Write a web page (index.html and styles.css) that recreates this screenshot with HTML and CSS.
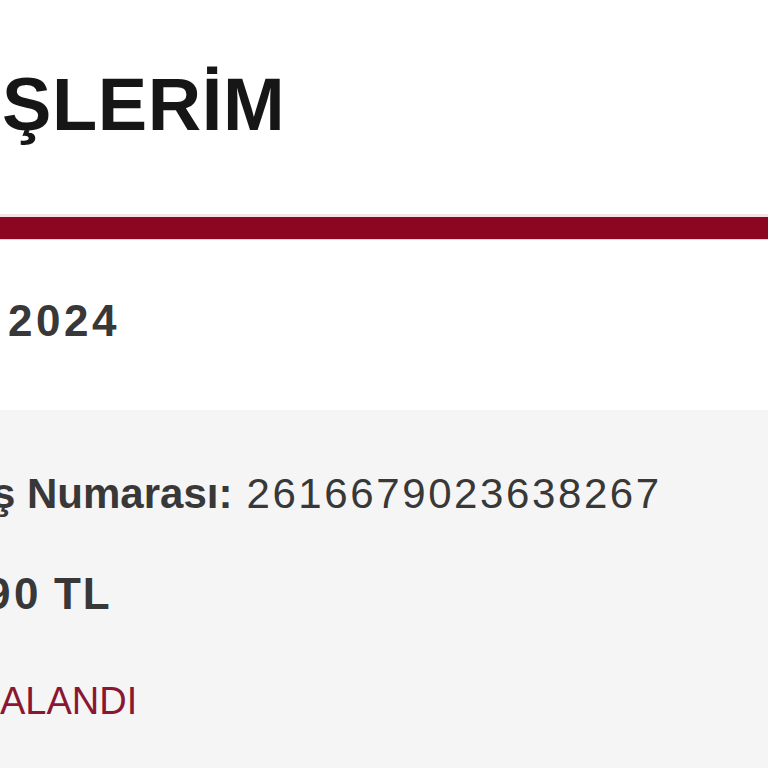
FILE: index.html
```html
<!DOCTYPE html>
<html lang="tr">
<head>
<meta charset="utf-8">
<title>Siparişlerim</title>
<link rel="stylesheet" href="styles.css">
</head>
<body>
<div class="page">
  <header class="header">
    <h1 class="title">ŞLERİM</h1>
  </header>
  <div class="divider"></div>
  <section class="date-block">
    <div class="date"><span class="digits-bold">2024</span></div>
  </section>
  <section class="order-card">
    <div class="row row-number"><span class="label">ş Numarası:</span><span class="order-no">2616679023638267</span></div>
    <div class="row row-price"><span class="digits-bold price-digits">90</span><span class="currency">TL</span></div>
    <div class="row row-status">ALANDI</div>
  </section>
</div>
</body>
</html>
```

FILE: styles.css
```css
html, body {
  margin: 0;
  padding: 0;
  background: #ffffff;
  overflow: hidden;
}

body {
  width: 768px;
  height: 768px;
  font-family: "Liberation Sans", Arial, sans-serif;
  color: #353535;
}

.page {
  display: flex;
  flex-direction: column;
  height: 768px;
}

.header {
  padding: 68px 0 72px;
  background: #ffffff;
}

.title {
  margin: 0 0 0 2px;
  font-size: 74px;
  line-height: 74px;
  font-weight: 700;
  letter-spacing: 0.6px;
  color: #161616;
  white-space: nowrap;
}

.divider {
  height: 22px;
  background: #8c0621;
  border-top: 3px solid #f4e3e6;
  border-bottom: 1px solid #efd0d6;
}

.date-block {
  padding: 59px 0 67px;
  background: #ffffff;
}

.date {
  margin-left: 8px;
  font-size: 44px;
  line-height: 44px;
  font-weight: 700;
  color: #383838;
}

.digits-bold {
  letter-spacing: 3.5px;
}

.order-card {
  flex: 1;
  background: #f5f5f5;
  padding-top: 63px;
  display: flex;
  flex-direction: column;
}

.row {
  white-space: nowrap;
}

.row-number {
  margin-left: -8px;
  font-size: 42px;
  line-height: 42px;
  color: #383838;
}

.label {
  font-weight: 700;
}

.order-no {
  margin-left: 14px;
  letter-spacing: 2.6px;
  font-weight: 400;
}

.row-price {
  margin-top: 57px;
  margin-left: -14px;
  font-size: 44px;
  line-height: 44px;
  font-weight: 700;
  color: #383838;
}

.currency {
  margin-left: 12px;
  letter-spacing: 2px;
}

.row-status {
  margin-top: 66px;
  font-size: 38px;
  line-height: 39px;
  font-weight: 400;
  color: #8a1632;
}
```
